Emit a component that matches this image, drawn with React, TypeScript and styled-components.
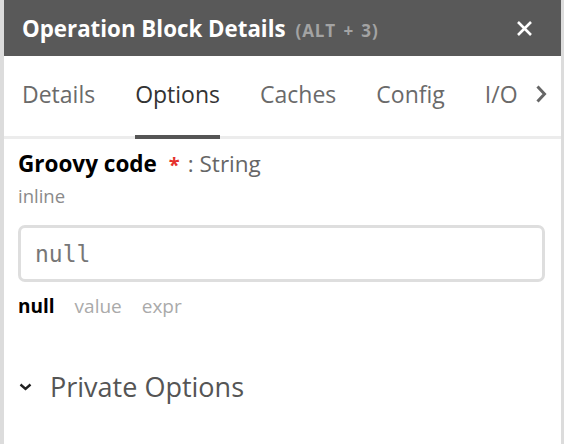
import React from "react";
import styled, { createGlobalStyle } from "styled-components";

const Global = createGlobalStyle`
  html, body { margin: 0; padding: 0; background: #dcdcdc; }
  body { font-family: "Open Sans", "Noto Sans", sans-serif; }
`;

const Frame = styled.div`
  height: 444px;
  padding: 0 3px 0 4px;
  box-sizing: border-box;
  overflow: hidden;
`;

const Panel = styled.div`
  background: #fff;
  height: 100%;
  display: flex;
  flex-direction: column;
`;

const Header = styled.div`
  height: 56px;
  background: #595959;
  display: flex;
  align-items: center;
  padding: 0 28px 0 18px;
  box-sizing: border-box;
`;

const Title = styled.div`
  color: #fff;
  font-weight: 700;
  font-size: 22.3px;
  flex: 1;
  display: flex;
  align-items: baseline;
  gap: 10px;
`;

const Shortcut = styled.span`
  color: #a3a3a3;
  font-size: 17px;
  font-weight: 700;
  letter-spacing: 0.9px;
  word-spacing: 2px;
`;

const CloseBtn = styled.button`
  background: none;
  border: none;
  padding: 0;
  width: 18px;
  height: 18px;
  display: flex;
  align-items: center;
  justify-content: center;
  cursor: pointer;
`;

const TabBar = styled.div`
  height: 80px;
  border-bottom: 3px solid #ececec;
  display: flex;
  align-items: stretch;
  padding-left: 18px;
  gap: 40px;
  position: relative;
`;

const Tab = styled.div<{ $active?: boolean }>`
  font-size: 23px;
  color: ${(p) => (p.$active ? "#333" : "#6a6a6a")};
  display: flex;
  align-items: center;
  padding-bottom: 4px;
  position: relative;
  &::after {
    content: "";
    position: absolute;
    left: 0;
    right: 0;
    bottom: -3px;
    height: 4px;
    background: ${(p) => (p.$active ? "#555" : "transparent")};
  }
`;

const TabArrow = styled.div`
  position: absolute;
  right: 14px;
  top: 0;
  bottom: 0;
  display: flex;
  align-items: center;
  padding-bottom: 4px;
  background: linear-gradient(to right, rgba(255,255,255,0), #fff 40%);
  padding-left: 10px;
`;

const Content = styled.div`
  padding: 10px 16px 0 14px;
  display: flex;
  flex-direction: column;
`;

const FieldLabel = styled.div`
  display: flex;
  align-items: baseline;
  font-size: 22.5px;
  line-height: 30px;
`;

const LabelName = styled.span`
  font-weight: 700;
  color: #000;
`;

const Required = styled.span`
  color: #e5322d;
  font-weight: 700;
  margin-left: 12px;
  font-size: 20px;
`;

const TypeName = styled.span`
  color: #666;
  margin-left: 8px;
`;

const SubLabel = styled.div`
  font-size: 18.5px;
  line-height: 24px;
  color: #8a8a8a;
  margin-top: 4px;
`;

const InputBox = styled.div`
  margin-top: 17px;
  height: 57px;
  border: 3px solid #dedede;
  border-radius: 7px;
  box-sizing: border-box;
  display: flex;
  align-items: center;
  padding-left: 14px;
  font-family: "DejaVu Sans Mono", "Liberation Mono", monospace;
  font-size: 23px;
  color: #777;
`;

const ModeRow = styled.div`
  display: flex;
  gap: 20px;
  margin-top: 11px;
  font-size: 19px;
  line-height: 26px;
`;

const Mode = styled.span<{ $active?: boolean }>`
  color: ${(p) => (p.$active ? "#000" : "#aaa")};
  font-weight: ${(p) => (p.$active ? 700 : 400)};
`;

const Section = styled.div`
  display: flex;
  align-items: center;
  margin-top: 50px;
  padding-left: 1px;
  gap: 18px;
`;

const SectionTitle = styled.span`
  font-size: 27px;
  line-height: 36px;
  color: #555;
`;

export default function App() {
  return (
    <>
      <Global />
      <Frame>
        <Panel>
          <Header>
            <Title>
              Operation Block Details <Shortcut>(ALT + 3)</Shortcut>
            </Title>
            <CloseBtn aria-label="close">
              <svg width="17" height="17" viewBox="0 0 17 17">
                <path d="M2 2 L15 15 M15 2 L2 15" stroke="#fff" strokeWidth="2.6" strokeLinecap="butt" />
              </svg>
            </CloseBtn>
          </Header>
          <TabBar>
            <Tab>Details</Tab>
            <Tab $active>Options</Tab>
            <Tab>Caches</Tab>
            <Tab>Config</Tab>
            <Tab>I/O</Tab>
            <TabArrow>
              <svg width="12" height="20" viewBox="0 0 12 20">
                <path d="M2.5 2.5 L9.5 10 L2.5 17.5" stroke="#666" strokeWidth="3" fill="none" />
              </svg>
            </TabArrow>
          </TabBar>
          <Content>
            <FieldLabel>
              <LabelName>Groovy code</LabelName>
              <Required>*</Required>
              <TypeName>: String</TypeName>
            </FieldLabel>
            <SubLabel>inline</SubLabel>
            <InputBox>null</InputBox>
            <ModeRow>
              <Mode $active>null</Mode>
              <Mode>value</Mode>
              <Mode>expr</Mode>
            </ModeRow>
            <Section>
              <svg width="13" height="8" viewBox="0 0 13 8">
                <path d="M1.5 1.5 L6.5 6 L11.5 1.5" stroke="#222" strokeWidth="2.4" fill="none" />
              </svg>
              <SectionTitle>Private Options</SectionTitle>
            </Section>
          </Content>
        </Panel>
      </Frame>
    </>
  );
}
